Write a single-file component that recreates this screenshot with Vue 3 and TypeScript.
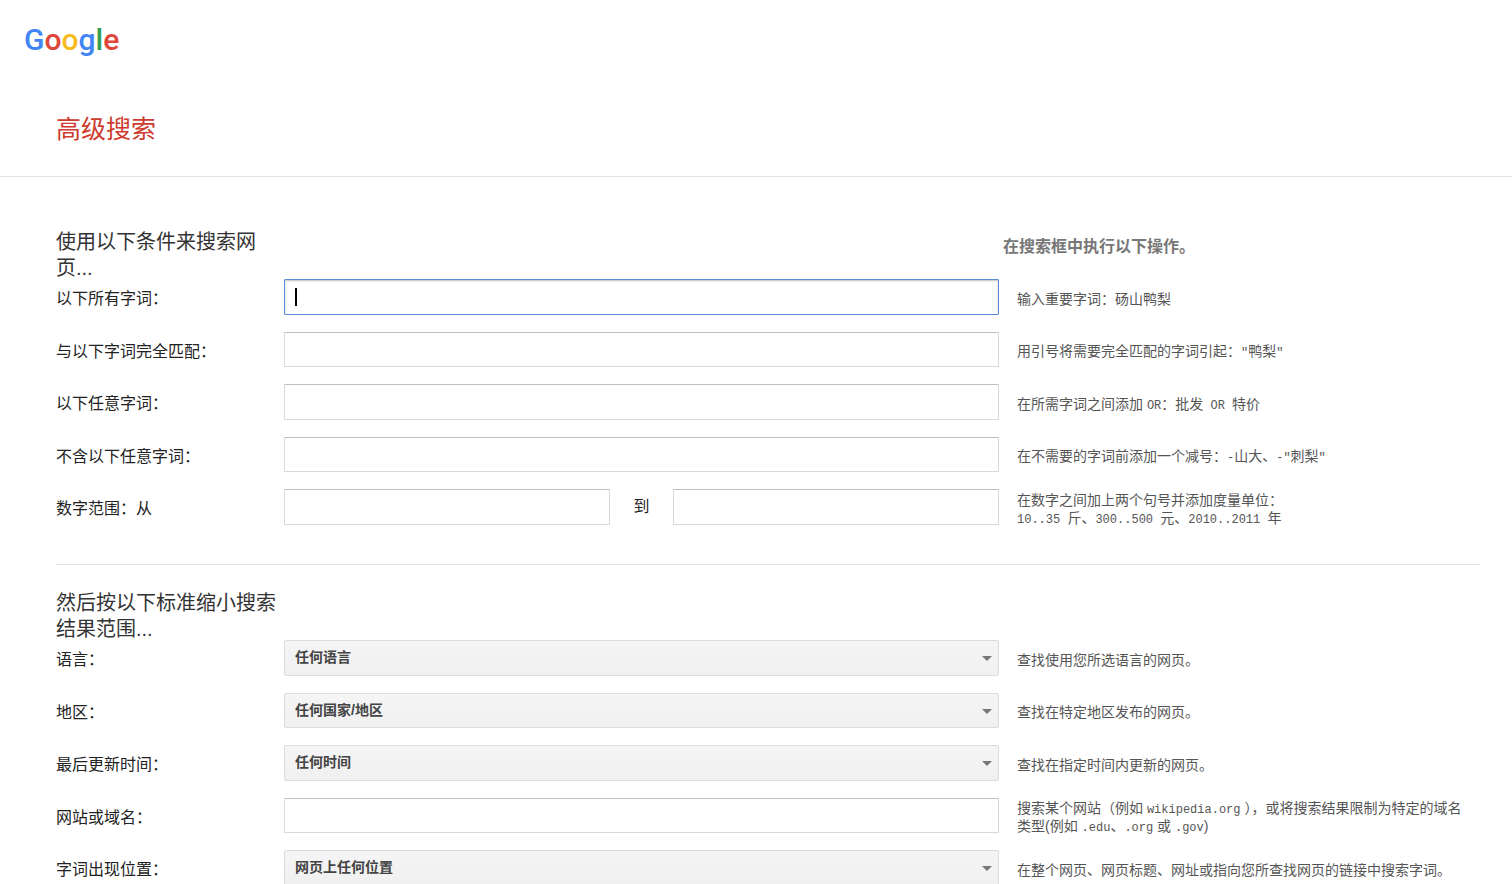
<script setup lang="ts">
import { ref } from 'vue'

type Kind = 'plain' | 'code' | 'mono'
type Segment = [Kind, string]

interface Row {
  id: string
  label: string
  type: 'text' | 'range' | 'select'
  active?: boolean
  options?: string[]
  hint: Segment[][]
}

const wordRows: Row[] = [
  {
    id: 'all',
    label: '以下所有字词：',
    type: 'text',
    active: true,
    hint: [[['plain', '输入重要字词：'], ['code', '砀山鸭梨']]],
  },
  {
    id: 'exact',
    label: '与以下字词完全匹配：',
    type: 'text',
    hint: [[['plain', '用引号将需要完全匹配的字词引起：'], ['mono', '"'], ['code', '鸭梨'], ['mono', '"']]],
  },
  {
    id: 'any',
    label: '以下任意字词：',
    type: 'text',
    hint: [[['plain', '在所需字词之间添加 '], ['mono', 'OR'], ['plain', '：'], ['code', '批发'], ['mono', ' OR '], ['code', '特价']]],
  },
  {
    id: 'none',
    label: '不含以下任意字词：',
    type: 'text',
    hint: [[['plain', '在不需要的字词前添加一个减号：'], ['mono', '-'], ['code', '山大、'], ['mono', '-"'], ['code', '刺梨'], ['mono', '"']]],
  },
  {
    id: 'low',
    label: '数字范围：从',
    type: 'range',
    hint: [
      [['plain', '在数字之间加上两个句号并添加度量单位：']],
      [['mono', '10..35 '], ['code', '斤、'], ['mono', '300..500 '], ['code', '元、'], ['mono', '2010..2011 '], ['code', '年']],
    ],
  },
]

const filterRows: Row[] = [
  {
    id: 'language',
    label: '语言：',
    type: 'select',
    options: ['任何语言'],
    hint: [[['plain', '查找使用您所选语言的网页。']]],
  },
  {
    id: 'region',
    label: '地区：',
    type: 'select',
    options: ['任何国家/地区'],
    hint: [[['plain', '查找在特定地区发布的网页。']]],
  },
  {
    id: 'updated',
    label: '最后更新时间：',
    type: 'select',
    options: ['任何时间'],
    hint: [[['plain', '查找在指定时间内更新的网页。']]],
  },
  {
    id: 'site',
    label: '网站或域名：',
    type: 'text',
    hint: [
      [['plain', '搜索某个网站（例如 '], ['mono', 'wikipedia.org'], ['plain', ' ），或将搜索结果限制为特定的域名']],
      [['plain', '类型(例如 '], ['mono', '.edu'], ['code', '、'], ['mono', '.org'], ['plain', ' 或 '], ['mono', '.gov'], ['plain', ')']],
    ],
  },
  {
    id: 'place',
    label: '字词出现位置：',
    type: 'select',
    options: ['网页上任何位置'],
    hint: [[['plain', '在整个网页、网页标题、网址或指向您所查找网页的链接中搜索字词。']]],
  },
]

const sections = [
  { title: '使用以下条件来搜索网页...', aside: '在搜索框中执行以下操作。', rows: wordRows },
  { title: '然后按以下标准缩小搜索结果范围...', aside: '', rows: filterRows },
]

const values = ref<Record<string, string>>({
  language: '任何语言',
  region: '任何国家/地区',
  updated: '任何时间',
  place: '网页上任何位置',
})
</script>

<template>
  <div class="page">
    <header class="header">
      <a class="logo" href="#" aria-label="Google">
        <svg width="100" height="40" viewBox="0 0 100 40" aria-hidden="true">
          <text x="0" y="30"><tspan fill="#4285f4">G</tspan><tspan fill="#e0463a">o</tspan><tspan fill="#f6bb1c">o</tspan><tspan fill="#4285f4">g</tspan><tspan fill="#34a050">l</tspan><tspan fill="#e0463a">e</tspan></text>
        </svg>
      </a>
      <h1 class="title">高级搜索</h1>
    </header>

    <form class="form" @submit.prevent>
      <section v-for="section in sections" :key="section.title" class="section">
        <div class="intro">
          <h2>{{ section.title }}</h2>
          <p v-if="section.aside" class="aside">{{ section.aside }}</p>
        </div>
        <div class="rows">
          <div v-for="row in section.rows" :key="row.id" class="row">
            <label class="label" :for="row.id">{{ row.label }}</label>

            <div v-if="row.type === 'text'" class="field">
              <input :id="row.id" v-model="values[row.id]" class="box" :class="{ active: row.active }" type="text" autocomplete="off" />
              <span v-if="row.active && !values[row.id]" class="caret"></span>
            </div>

            <div v-else-if="row.type === 'range'" class="field range">
              <input :id="row.id" v-model="values.low" class="box" type="text" autocomplete="off" />
              <label class="to" for="high">到</label>
              <input id="high" v-model="values.high" class="box" type="text" autocomplete="off" />
            </div>

            <div v-else class="field drop">
              <select :id="row.id" v-model="values[row.id]" class="select">
                <option v-for="option in row.options" :key="option" :value="option">{{ option }}</option>
              </select>
            </div>

            <div class="hint">
              <div v-for="(line, i) in row.hint" :key="i" class="line"><span v-for="(part, j) in line" :key="j" :class="part[0]">{{ part[1] }}</span></div>
            </div>
          </div>
        </div>
      </section>
    </form>
  </div>
</template>

<style>
html {
  scrollbar-width: none;
}

body {
  background: #fff;
}
</style>

<style scoped>
.page {
  font-family: "Liberation Sans", "Noto Sans CJK SC", sans-serif;
  font-size: 16px;
  color: #222;
}

.header {
  border-bottom: 1px solid #e5e5e5;
  padding: 20px 24px 29px;
}

.logo {
  display: block;
  width: 100px;
  height: 40px;
}

.logo svg {
  display: block;
}

.logo text {
  font-family: Roboto, sans-serif;
  font-size: 30px;
  font-weight: 500;
}

.title {
  margin: 51px 0 0 32px;
  font-size: 25px;
  line-height: 36px;
  font-weight: 400;
  color: #cd3c2e;
}

.form {
  padding: 52px 32px 0 56px;
}

.section + .section {
  margin-top: 39px;
  border-top: 1px solid #e5e5e5;
  padding-top: 25px;
}

.intro,
.row {
  display: grid;
  grid-template-columns: 228px minmax(0, 715fr) minmax(0, 481fr);
}

.intro {
  margin-bottom: -2px;
}

h2 {
  margin: 0;
  font-size: 20px;
  line-height: 26px;
  font-weight: 400;
  color: #333;
}

.aside {
  grid-column: 3;
  margin: 5px 0 0 4px;
  font-size: 16px;
  line-height: 26px;
  font-weight: 700;
  color: #777;
}

.rows {
  display: grid;
  gap: 17px;
}

.row {
  height: 36px;
  grid-template-rows: minmax(0, 1fr);
  align-items: center;
}

.row:nth-child(even) {
  height: 35px;
}

.label {
  padding-top: 4px;
  line-height: 24px;
}

.field {
  position: relative;
  height: 100%;
}

.box,
.select {
  box-sizing: border-box;
  display: block;
  width: 100%;
  height: 100%;
  margin: 0;
  padding: 0 10px;
  font-family: inherit;
  outline: none;
}

.box {
  border: 1px solid #d9d9d9;
  border-top-color: #c0c0c0;
  border-radius: 1px;
  background: #fff;
  font-size: 16px;
  color: #000;
}

.box.active,
.box:focus {
  border-color: #5a8cd8;
  box-shadow: inset 0 1px 2px rgba(0, 0, 0, 0.25);
}

.caret {
  position: absolute;
  left: 11px;
  top: 9px;
  width: 2px;
  height: 18px;
  background: #000;
  pointer-events: none;
}

.range {
  display: grid;
  grid-template-columns: 1fr 63px 1fr;
  align-items: center;
}

.to {
  text-align: center;
  line-height: 24px;
}

.drop::after {
  content: "";
  position: absolute;
  right: 7px;
  top: 16px;
  border: 5px solid transparent;
  border-top-color: #777;
  border-bottom-width: 0;
  pointer-events: none;
}

.select {
  appearance: none;
  padding-bottom: 2px;
  border: 1px solid #dcdcdc;
  border-radius: 2px;
  background: linear-gradient(#f5f5f5, #f0f0f0);
  font-size: 14px;
  font-weight: 700;
  color: #444;
}

.hint {
  padding: 3px 0 0 18px;
  font-size: 14px;
  color: #555;
}

.line {
  line-height: 18px;
  white-space: pre-wrap;
}

.mono {
  font-family: "Liberation Mono", monospace;
  font-size: 12px;
  line-height: 1;
}

.code {
  font-family: "Noto Sans CJK SC", sans-serif;
  line-height: 1;
}
</style>
